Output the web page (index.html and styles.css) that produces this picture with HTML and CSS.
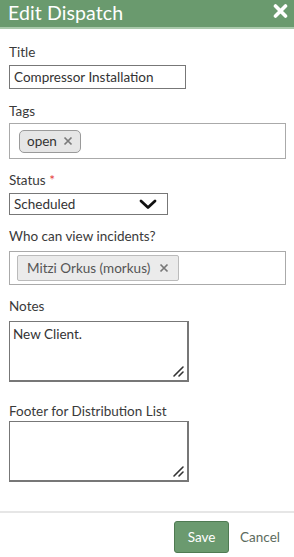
FILE: index.html
```html
<!DOCTYPE html>
<html lang="en">
<head>
  <meta charset="UTF-8" />
  <meta name="viewport" content="width=device-width, initial-scale=1.0"/>
  <title>Edit Dispatch</title>
  <link rel="stylesheet" href="styles.css">
</head>
<body>
  <div class="dialog">
    <div class="dialog-header">
      <h1>Edit Dispatch</h1>
      <button class="close-btn" aria-label="Close">
        <svg width="15" height="14" viewBox="0 0 15 14">
          <path d="M2.5 2 L12.5 12 M12.5 2 L2.5 12" stroke="#fff" stroke-width="3.6" stroke-linecap="round"/>
        </svg>
      </button>
    </div>

    <form class="dialog-body">
      <div class="field field-title">
        <label>Title</label>
        <div class="input title-input">Compressor Installation</div>
      </div>

      <div class="field field-tags">
        <label>Tags</label>
        <div class="input chips-box tags-box">
          <span class="chip chip-tag">open <svg class="chip-x" width="10" height="10" viewBox="0 0 10 10"><path d="M1.5 1.5 L8.5 8.5 M8.5 1.5 L1.5 8.5" stroke="#7a7a7a" stroke-width="1.7"/></svg></span>
        </div>
      </div>

      <div class="field field-status">
        <label>Status <span class="req">*</span></label>
        <div class="input select-box">
          <span>Scheduled</span>
          <svg width="18" height="11" viewBox="0 0 18 11">
            <path d="M2 2 L9 8.5 L16 2" fill="none" stroke="#111" stroke-width="2.8" stroke-linecap="round" stroke-linejoin="round"/>
          </svg>
        </div>
      </div>

      <div class="field field-viewers">
        <label>Who can view incidents?</label>
        <div class="input chips-box viewers-box">
          <span class="chip chip-user">Mitzi Orkus (morkus) <svg class="chip-x" width="10" height="10" viewBox="0 0 10 10"><path d="M1.5 1.5 L8.5 8.5 M8.5 1.5 L1.5 8.5" stroke="#777" stroke-width="1.7"/></svg></span>
        </div>
      </div>

      <div class="field field-notes">
        <label>Notes</label>
        <div class="input textarea">
          New Client.
          <svg class="grip" width="14" height="14" viewBox="0 0 14 14">
            <path d="M3 12 L12 3 M8 12 L12 8" stroke="#333" stroke-width="1.6" stroke-linecap="round"/>
          </svg>
        </div>
      </div>

      <div class="field field-footer">
        <label>Footer for Distribution List</label>
        <div class="input textarea">
          <svg class="grip" width="14" height="14" viewBox="0 0 14 14">
            <path d="M3 12 L12 3 M8 12 L12 8" stroke="#333" stroke-width="1.6" stroke-linecap="round"/>
          </svg>
        </div>
      </div>
    </form>

    <div class="dialog-footer">
      <button class="btn-save" type="button">Save</button>
      <a class="btn-cancel" href="#">Cancel</a>
    </div>
  </div>
</body>
</html>
```

FILE: styles.css
```css
* {
  margin: 0;
  padding: 0;
  box-sizing: border-box;
}
body {
  font-family: Lato, 'Open Sans', sans-serif;
  font-size: 13.5px;
  color: #333;
  background: #fff;
}
.dialog {
  width: 294px;
  height: 557px;
  background: #fff;
}
.dialog-header {
  height: 29px;
  background: #6a9a6e;
  border-bottom: 2px solid #a9c9ab;
  display: flex;
  align-items: center;
  justify-content: space-between;
  padding: 0 6px 2px 8px;
}
.dialog-header h1 {
  font-size: 19.5px;
  font-weight: 400;
  color: #fff;
  letter-spacing: 0.1px;
}
.close-btn {
  border: none;
  background: none;
  display: flex;
  margin-top: -4px;
}
.dialog-body {
  padding: 15px 8px 0 9px;
}
.field {
  margin-bottom: 13px;
}
.field label {
  display: block;
  line-height: 16px;
  margin-bottom: 5px;
  color: #3a3a3a;
}
.req {
  color: #e53935;
}
.input {
  border: 1px solid #888;
  background: #fff;
  color: #333;
}
.title-input {
  width: 177px;
  height: 24px;
  padding: 3px 4px;
  line-height: 16px;
  border-color: #777;
}
.field-title {
  margin-bottom: 14px;
}
.field-tags label {
  margin-bottom: 4px;
}
.chips-box {
  width: 277px;
  border-color: #aaa;
  display: flex;
  align-items: center;
}
.tags-box {
  height: 36px;
  padding: 0 9px;
}
.chip {
  display: inline-flex;
  align-items: center;
  gap: 6px;
}
.chip-tag {
  height: 23px;
  padding: 0 7px 0 7px;
  border: 1px solid #9a9a9a;
  border-radius: 5px;
  background: #e6e6e6;
  color: #333;
}
.chip-x {
  display: block;
}
.select-box {
  width: 159px;
  height: 22px;
  padding: 0 10px 0 4px;
  border-color: #777;
  display: flex;
  align-items: center;
  justify-content: space-between;
}
.field-viewers label {
  margin-bottom: 7px;
}
.viewers-box {
  height: 34px;
  padding: 0 7px;
}
.chip-user {
  height: 26px;
  padding: 0 9px 0 9px;
  border: 1px solid #bbb;
  border-radius: 2px;
  background: #ebebeb;
  color: #555;
  gap: 9px;
}
.field-notes {
  margin-bottom: 21px;
}
.field-notes label {
  margin-bottom: 7px;
}
.field-footer label {
  margin-bottom: 2px;
}
.textarea {
  position: relative;
  width: 180px;
  height: 61px;
  padding: 4px 3px;
  line-height: 16px;
  border: 2px solid #777;
  border-width: 1px 2px 2px 1px;
}
.grip {
  position: absolute;
  right: 2px;
  bottom: 2px;
}
.dialog-footer {
  margin-top: 29px;
  border-top: 2px solid #e6e6e6;
  padding: 8px 14px 0 0;
  display: flex;
  justify-content: flex-end;
  align-items: center;
  gap: 11px;
}
.btn-save {
  width: 55px;
  height: 32px;
  font-family: Lato, 'Open Sans', sans-serif;
  font-size: 13.5px;
  color: #fff;
  background: #6b9a6f;
  border: 1px solid #4f7a52;
  border-radius: 3px;
}
.btn-cancel {
  color: #5c6b5d;
  text-decoration: none;
}
```
